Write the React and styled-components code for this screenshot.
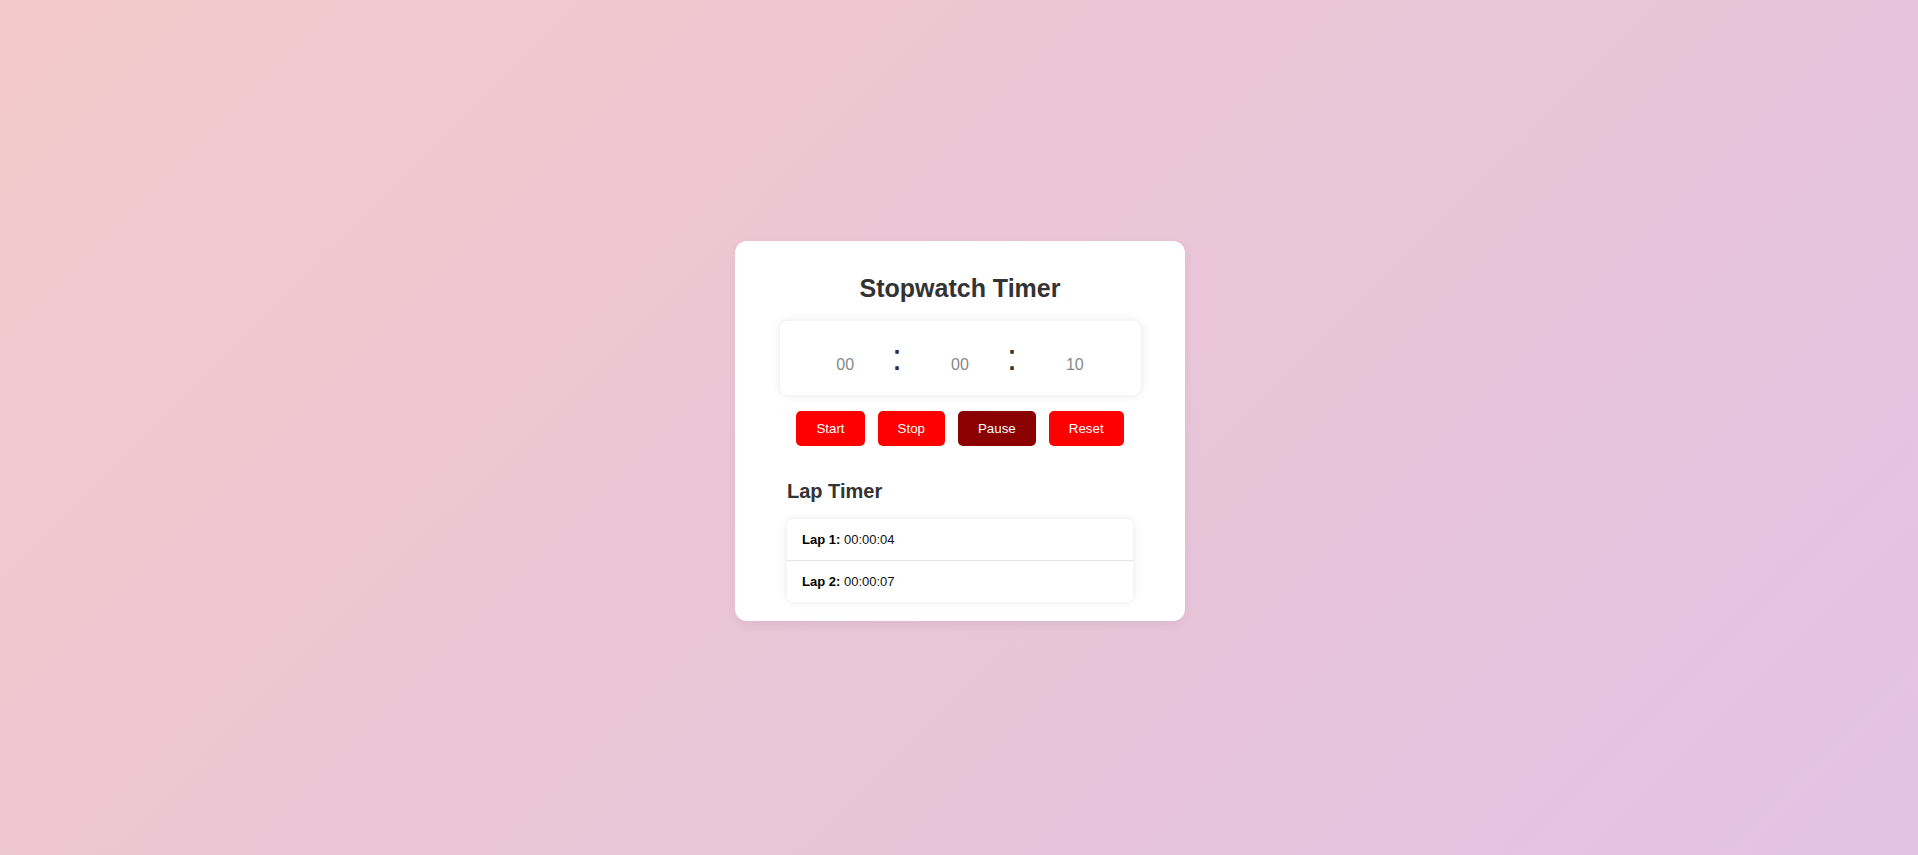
import React from "react"
import styled, { createGlobalStyle } from "styled-components"

const GlobalStyle = createGlobalStyle`
  html, body {
    margin: 0;
    height: 100%;
  }
  body {
    font-family: "Liberation Sans", Arial, sans-serif;
    background: linear-gradient(135deg, #f3c9c9 0%, #e2c2e4 100%);
  }
  #root {
    min-height: 100%;
  }
`

const Page = styled.div`
  min-height: 855px;
  box-sizing: border-box;
  padding-left: 2px;
  display: flex;
  align-items: center;
  justify-content: center;
`

const Card = styled.div`
  width: 450px;
  box-sizing: border-box;
  padding: 19px 0 19px;
  margin-top: 6px;
  background: #fff;
  border-radius: 12px;
  box-shadow: 0 4px 12px rgba(0, 0, 0, 0.06);
  display: flex;
  flex-direction: column;
  align-items: center;
`

const Title = styled.h1`
  margin: 14px 0 18px;
  font-size: 25px;
  font-weight: bold;
  color: #333;
`

const Display = styled.div`
  width: 361px;
  box-sizing: border-box;
  padding: 16px 0;
  border-radius: 8px;
  background: #fff;
  box-shadow: 0 0 10px rgba(0, 0, 0, 0.1);
  display: flex;
  justify-content: center;
  align-items: baseline;
`

const Digits = styled.span`
  font-size: 16px;
  color: #888;
`

const Colon = styled.span`
  font-size: 36px;
  color: #333;
  margin: 0 49px 0 38px;
`

const Controls = styled.div`
  display: flex;
  gap: 13px;
  margin-top: 16px;
`

const Button = styled.button`
  font-family: "Liberation Sans", Arial, sans-serif;
  font-size: 13.333px;
  line-height: 15px;
  padding: 10px 20px;
  border: none;
  border-radius: 5px;
  color: #fff;
  background: ${ p => p.dark ? "#8b0000" : "#ff0000" };
  cursor: pointer;
`

const LapSection = styled.div`
  width: 346px;
  margin-top: 34px;
`

const LapHeading = styled.h2`
  margin: 0 0 16px;
  font-size: 20px;
  line-height: 23px;
  font-weight: bold;
  color: #333;
`

const LapList = styled.ul`
  list-style: none;
  margin: 0;
  padding: 0;
  border-radius: 6px;
  background: #fff;
  box-shadow: 0 0 8px rgba(0, 0, 0, 0.1);
`

const LapItem = styled.li`
  padding: 13px 15px;
  font-size: 13px;
  line-height: 15px;
  color: #111;
  & + & {
    border-top: 1px solid #e4e4e4;
  }
  b {
    color: #000;
  }
`

const laps = ["00:00:04", "00:00:07"];

const App = () => {
  return (
    <>
      <GlobalStyle />
      <Page>
        <Card>
          <Title>Stopwatch Timer</Title>
          <Display>
            <Digits>00</Digits>
            <Colon>:</Colon>
            <Digits>00</Digits>
            <Colon>:</Colon>
            <Digits>10</Digits>
          </Display>
          <Controls>
            <Button>Start</Button>
            <Button>Stop</Button>
            <Button dark>Pause</Button>
            <Button>Reset</Button>
          </Controls>
          <LapSection>
            <LapHeading>Lap Timer</LapHeading>
            <LapList>
              { laps.map((t, i) =>
                  <LapItem key={ i }><b>Lap { i + 1 }:</b> { t }</LapItem>
                )
              }
            </LapList>
          </LapSection>
        </Card>
      </Page>
    </>
  )
}
export default App
